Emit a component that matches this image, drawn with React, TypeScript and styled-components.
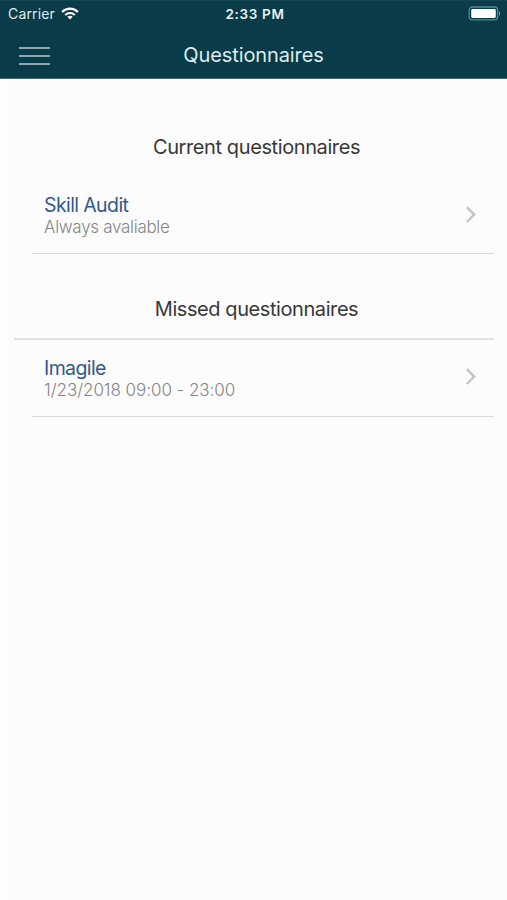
import React from "react";
import styled, { createGlobalStyle } from "styled-components";

const GlobalStyle = createGlobalStyle`
  * { box-sizing: border-box; }
  html, body { margin: 0; padding: 0; background: #fcfcfc; }
  body { font-family: Inter, "Liberation Sans", sans-serif; }
`;

const Screen = styled.div`
  width: 507px;
  height: 900px;
  display: flex;
  flex-direction: column;
  overflow: hidden;
  background: linear-gradient(to right, #fefefe 9px, #fcfcfc 9px);
`;

const Header = styled.header`
  height: 79px;
  flex: none;
  display: flex;
  flex-direction: column;
  color: #dfecef;
  background: #093b48;
  border-top: 1px solid #154654;
  border-bottom: 1px solid #42666f;
`;

const StatusBar = styled.div`
  height: 25px;
  display: grid;
  grid-template-columns: 1fr auto 1fr;
  align-items: center;
  padding: 0 6px 0 8px;
`;

const Carrier = styled.div`
  display: flex;
  align-items: center;
  gap: 6px;
  font-size: 14px;
  line-height: 18px;
  letter-spacing: 0.15px;
`;

const Time = styled.div`
  padding-left: 1px;
  font-size: 13.5px;
  line-height: 18px;
  font-weight: 600;
  letter-spacing: 0.65px;
  color: #e9f3f5;
`;

const BatterySlot = styled.div`
  display: flex;
  justify-content: flex-end;
`;

const NavBar = styled.div`
  flex: 1;
  display: grid;
  grid-template-columns: 60px 1fr 60px;
  align-items: start;
`;

const MenuButton = styled.button`
  border: 0;
  padding: 20px 0 0 19px;
  background: none;
  display: flex;
`;

const Title = styled.h1`
  margin: 17px 0 0;
  text-align: center;
  font-size: 20px;
  line-height: 24px;
  font-weight: 400;
  letter-spacing: -0.1px;
`;

const Section = styled.section`
  display: flex;
  flex-direction: column;
  padding: 0 13px 0 14px;
`;

const SectionTitle = styled.h2<{ $height: number; $ruled?: boolean }>`
  margin: 0;
  height: ${(p) => p.$height}px;
  padding: 0 0 16px 5px;
  display: flex;
  align-items: flex-end;
  justify-content: center;
  border-bottom: ${(p) => (p.$ruled ? "2px solid #e2e2e2" : "0")};
  font-size: 20px;
  line-height: 26px;
  font-weight: 400;
  letter-spacing: ${(p) => (p.$ruled ? -0.42 : -0.4)}px;
  color: #383838;
`;

const Row = styled.div<{ $height: number }>`
  height: ${(p) => p.$height}px;
  margin-left: 18px;
  padding: 0 17px 0 12px;
  display: flex;
  align-items: flex-start;
  justify-content: space-between;
  border-bottom: 1px solid #dadada;
`;

const RowText = styled.div<{ $top: number }>`
  padding-top: ${(p) => p.$top}px;
`;

const ChevronSlot = styled.div<{ $top: number }>`
  display: flex;
  padding-top: ${(p) => p.$top}px;
`;

const RowName = styled.div`
  font-size: 19.5px;
  line-height: 24px;
  letter-spacing: -0.6px;
  color: #31598d;
`;

const RowDetail = styled.div<{ $spacing: number }>`
  font-size: 17px;
  line-height: 20px;
  font-weight: 300;
  letter-spacing: ${(p) => p.$spacing}px;
  color: #858585;
`;

const MenuIcon = () => (
  <svg width="31" height="20" viewBox="0 0 31 20" fill="none" stroke="#b7cdd1" strokeWidth="1.6">
    <path d="M0 2h31M0 10h31M0 18h31" />
  </svg>
);

const Wifi = () => (
  <svg width="18" height="13" viewBox="0 0 18 13" fill="none" stroke="#fff" strokeWidth="2.1">
    <path d="M1.1 4.9C5.5.5 12.5.5 16.9 4.9" />
    <path d="M4.2 8C6.9 5.4 11.1 5.4 13.8 8" />
    <path d="M9 12.4 6.3 9.7C7.8 8.4 10.2 8.4 11.7 9.7Z" fill="#fff" stroke="none" />
  </svg>
);

const Battery = () => (
  <svg width="33" height="15" viewBox="0 0 33 15" fill="none">
    <rect x="1.2" y="1" width="28.4" height="12.8" rx="3" stroke="#5c848c" strokeWidth="1.3" />
    <rect x="3.2" y="3" width="24.6" height="9" rx="1.4" fill="#fff" />
    <path d="M31 5.3c1.6.7 1.6 3.8 0 4.5z" fill="#7fa0a6" />
  </svg>
);

const Chevron = () => (
  <svg width="12" height="18" viewBox="0 0 12 18" fill="none" stroke="#c3c3c3" strokeWidth="2.4">
    <path d="M1.8 1.2 9.2 8.6 1.8 16" />
  </svg>
);

interface ItemProps {
  name: string;
  detail: string;
  height: number;
  top: number;
  chevronTop: number;
  spacing: number;
}

const Item = ({ name, detail, height, top, chevronTop, spacing }: ItemProps) => (
  <Row $height={height}>
    <RowText $top={top}>
      <RowName>{name}</RowName>
      <RowDetail $spacing={spacing}>{detail}</RowDetail>
    </RowText>
    <ChevronSlot $top={chevronTop}>
      <Chevron />
    </ChevronSlot>
  </Row>
);

export default function App() {
  return (
    <>
      <GlobalStyle />
      <Screen>
        <Header>
          <StatusBar>
            <Carrier>
              Carrier
              <Wifi />
            </Carrier>
            <Time>2:33 PM</Time>
            <BatterySlot>
              <Battery />
            </BatterySlot>
          </StatusBar>
          <NavBar>
            <MenuButton aria-label="Menu">
              <MenuIcon />
            </MenuButton>
            <Title>Questionnaires</Title>
          </NavBar>
        </Header>
        <Section>
          <SectionTitle $height={97}>Current questionnaires</SectionTitle>
          <Item
            name="Skill Audit"
            detail="Always avaliable"
            height={78}
            top={17}
            chevronTop={30}
            spacing={-0.3}
          />
        </Section>
        <Section>
          <SectionTitle $height={86} $ruled>
            Missed questionnaires
          </SectionTitle>
          <Item
            name="Imagile"
            detail="1/23/2018 09:00 - 23:00"
            height={77}
            top={16}
            chevronTop={28}
            spacing={-0.05}
          />
        </Section>
      </Screen>
    </>
  );
}
